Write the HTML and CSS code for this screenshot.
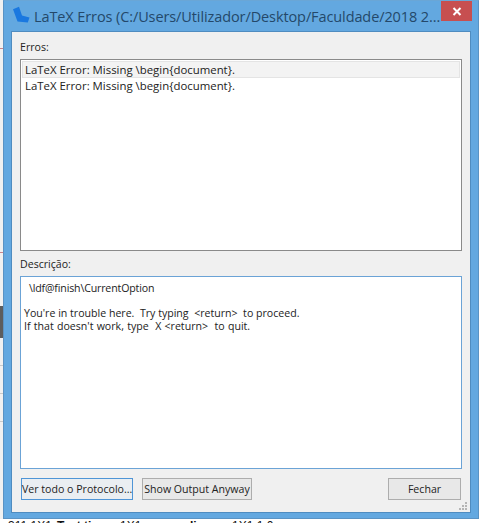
FILE: index.html
```html
<!DOCTYPE html>
<html lang="pt">
<head>
<meta charset="utf-8">
<title>LaTeX Erros</title>
<link rel="stylesheet" href="styles.css">
</head>
<body>
<div class="desktop">
  <div class="back-strip">
    <span class="tick tick-a"></span>
    <span class="tick tick-b"></span>
    <span class="dark-block"></span>
    <span class="tick tick-c"></span>
    <span class="tick tick-c"></span>
    <span class="tick tick-c"></span>
  </div>
  <div class="back-text"><span class="bt-a">311 1X1</span><span class="bt-b">Test time</span><span class="bt-c">1X1</span><span class="bt-d">ascending</span><span class="bt-e">1X1 1 0</span></div>
  <div class="window">
    <header class="titlebar">
      <svg class="app-icon" width="20" height="18" viewBox="0 0 20 18"><path d="M1 3.2 7 .8 10 9.5 17.5 11.5 15.8 16.5 5.5 15.5Z" fill="#1a78e0"/></svg>
      <span class="title">LaTeX Erros (C:/Users/Utilizador/Desktop/Faculdade/2018 2...</span>
      <button class="close" aria-label="Fechar"><svg width="10" height="9" viewBox="0 0 10 9"><path d="M1.5 1 8.5 8M8.5 1 1.5 8" stroke="#fff" stroke-width="2" fill="none"/></svg></button>
    </header>
    <main class="content">
      <div class="label label-top">Erros:</div>
      <div class="list">
        <div class="row selected">LaTeX Error: Missing \begin{document}.</div>
        <div class="row">LaTeX Error: Missing \begin{document}.</div>
      </div>
      <div class="label label-mid">Descrição:</div>
      <div class="desc">
        <div class="desc-first">\ldf@finish\CurrentOption</div>
        <pre class="desc-text">You're in trouble here.  Try typing  &lt;return&gt;  to proceed.
<span class="desc-wide">If that doesn't work, type  X &lt;return&gt;  to quit.</span></pre>
      </div>
      <div class="actions">
        <button class="btn btn-focus">Ver todo o Protocolo...</button>
        <button class="btn btn-show">Show Output Anyway</button>
        <button class="btn btn-close">Fechar</button>
      </div>
      <svg class="grip" width="9" height="9" viewBox="0 0 9 9"><path d="M6 0h2v2H6zM3 3h2v2H3zM6 3h2v2H6zM0 6h2v2H0zM3 6h2v2H3zM6 6h2v2H6z" fill="#b5b5b5"/></svg>
    </main>
  </div>
</div>
</body>
</html>
```
FILE: styles.css
```css
* { box-sizing: border-box; }
html, body { margin: 0; padding: 0; }
body { width: 481px; height: 523px; overflow: hidden; background: #fff; font-family: "Open Sans", "Noto Sans", sans-serif; }
.desktop { position: relative; width: 481px; height: 523px; overflow: hidden; background: #fff; }

.back-strip { position: absolute; left: 0; top: 0; width: 4px; height: 519px; background: #f1f1f1; display: flex; flex-direction: column; }
.tick { display: block; height: 1px; background: #c9c9c9; }
.tick-a { margin-top: 48px; background: #c9848c; }
.tick-b { margin-top: 203px; background: #c9848c; }
.dark-block { display: block; height: 32px; margin-top: 53px; background: #5d5d5d; }
.tick-c { margin-top: 27px; }

.back-text { position: absolute; left: 8px; top: 519px; height: 4px; width: 473px; overflow: hidden; display: flex; font-family: "Liberation Sans", sans-serif; font-size: 12px; line-height: 14px; color: #111; white-space: nowrap; }
.bt-a { width: 49px; }
.bt-b { width: 63px; font-weight: bold; }
.bt-c { width: 32px; }
.bt-d { width: 80px; font-weight: bold; }
.bt-e { width: 60px; }

.window { position: absolute; left: 3px; top: 0; width: 476px; height: 519px; background: #63a8e0; border: 1px solid #5a93c4; border-top-color: #6aa6d6; display: flex; flex-direction: column; padding: 0 7px 5px; }

.titlebar { height: 30px; flex: none; display: flex; align-items: flex-start; position: relative; }
.app-icon { margin: 5px 0 0 1px; flex: none; }
.title { margin: 5px 0 0 2px; font-size: 14.5px; line-height: 21px; color: #24486a; white-space: nowrap; letter-spacing: -0.1px; }
.close { position: absolute; right: -1px; top: 0; width: 31px; height: 20px; padding: 0; border: 0; background: #c74f50; display: flex; align-items: center; justify-content: center; }

.content { position: relative; flex: 1; background: #f0f0f0; border: 1px solid #4f8cc0; padding: 0 8px; display: flex; flex-direction: column; font-size: 10.6px; color: #222; }
.label { line-height: 15px; height: 15px; }
.label-top { margin-top: 8px; }
.label-mid { margin-top: 6px; }

.list { height: 192px; margin-top: 4px; background: #fff; border: 1px solid #8a8a8a; padding: 1px; font-size: 11.4px; }
.row { height: 17px; line-height: 16px; padding-left: 3px; }
.row.selected { background: #f3f3f3; border: 1px solid #e4e4e4; padding-left: 2px; line-height: 15px; }

.desc { height: 193px; margin-top: 4px; background: #fff; border: 1px solid #6ba3d6; padding: 5px 3px; }
.desc-first { line-height: 13px; padding-left: 5px; letter-spacing: -0.15px; }
.desc-text { margin: 12px 0 0; font: inherit; line-height: 13px; white-space: pre-wrap; }
.desc-wide { word-spacing: 0.5px; }

.actions { display: flex; margin-top: 9px; margin-left: 1px; }
.btn { height: 22px; padding: 0; background: #e8e8e8; border: 1px solid #adadad; font: inherit; font-size: 10.6px; color: #222; white-space: nowrap; }
.btn-focus { width: 112px; background: #eaeef2; border-color: #4f95d6; }
.btn-show { width: 110px; margin-left: 9px; }
.btn-close { width: 73px; margin-left: auto; margin-right: 1px; }

.grip { position: absolute; right: 2px; bottom: 1px; }
```
